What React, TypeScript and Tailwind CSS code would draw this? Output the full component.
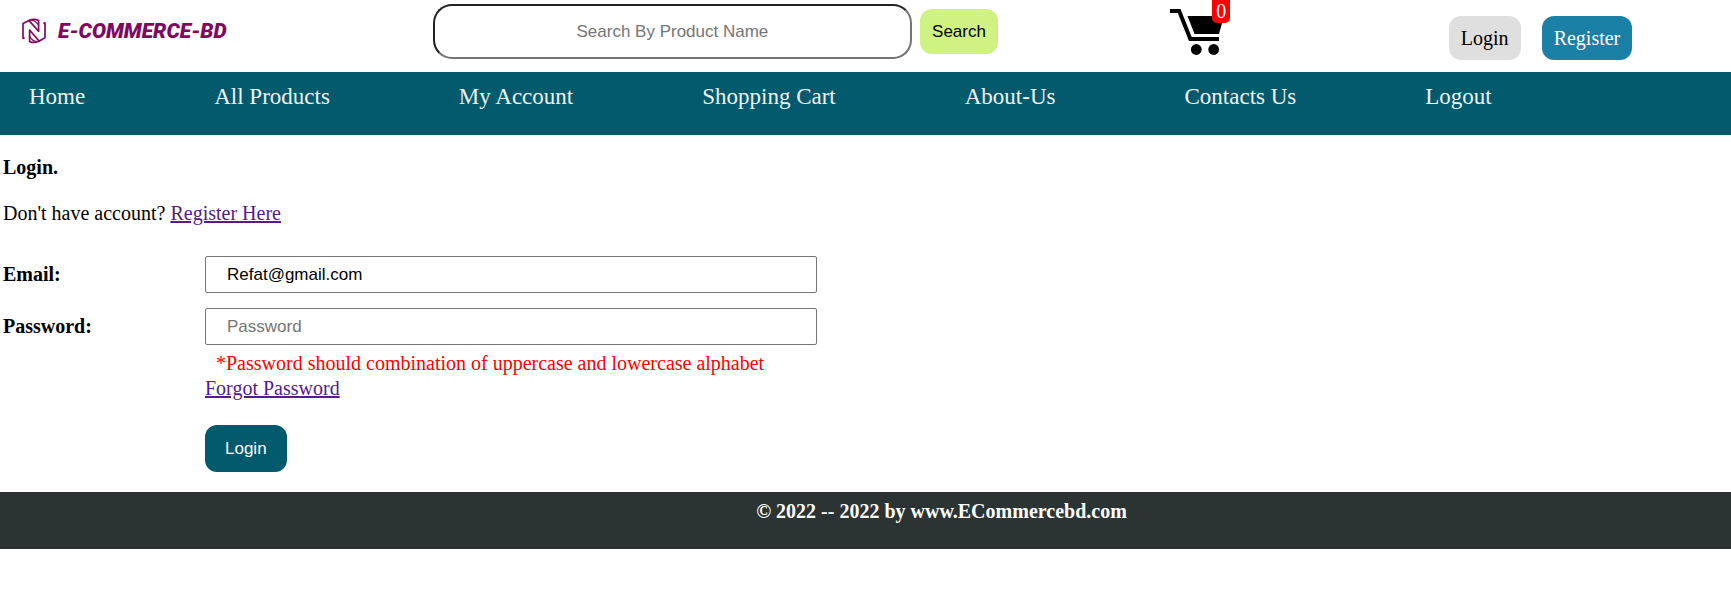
const navItems = [
  'Home',
  'All Products',
  'My Account',
  'Shopping Cart',
  'About-Us',
  'Contacts Us',
  'Logout',
];

function Logo() {
  return (
    <a href="#" className="flex items-center gap-3 pl-[22px] text-[#82085f]">
      <svg viewBox="0 0 24 26" className="h-[26px] w-6" fill="none" stroke="currentColor" strokeWidth="1.7" strokeLinejoin="round">
        <path d="M2.6 19.6L1 20.3V5.4L7 2.4Q12.5 .2 16.6 2.4V13.2L7 2.6" />
        <path d="M21.4 5.6L23 4.8V19.8L17 23.2Q11.5 25.6 7.6 23.4V12L17 23" />
        <path d="M9.4 2.4Q13.6 2.4 16.4 7M14.6 23.4Q10.4 23.2 7.8 18.6" strokeWidth="1.2" />
      </svg>
      <span className="font-['Roboto',sans-serif] text-[21px] leading-6 font-black italic">E-COMMERCE-BD</span>
    </a>
  );
}

function Cart() {
  return (
    <a href="#" aria-label="Shopping cart" className="relative block h-[55px] w-[60px]">
      <svg viewBox="0 0 60 55" className="h-[55px] w-[60px]" fill="currentColor">
        <path d="M0 9h10.5l11.2 28H49v4H19L7.8 13H0z" />
        <path d="M17.5 16H54l-5 18H24.5z" />
        <circle cx="26.3" cy="49.5" r="5.4" />
        <circle cx="43.7" cy="49.5" r="5.4" />
      </svg>
      <span className="absolute top-0 right-0 h-[23px] rounded-b-[5px] bg-[#ff0000] px-1 text-xl leading-[22px] text-white">0</span>
    </a>
  );
}

const fieldClass =
  "h-[37px] w-full rounded-[2px] border border-[#767676] bg-white px-[21px] font-['Liberation_Sans',sans-serif] text-[17px] text-black placeholder:text-[#757575] placeholder:opacity-100";

export default function App() {
  return (
    <div className="bg-white font-['Liberation_Serif',serif] text-xl leading-[25px] text-black">
      <header className="grid h-[72px] grid-cols-[250fr_426fr_161fr_163fr] items-start">
        <div className="pt-[18px]">
          <Logo />
        </div>
        <form className="flex items-center gap-2 pt-1" onSubmit={(e) => e.preventDefault()}>
          <input
            type="text"
            aria-label="Search products"
            placeholder="Search By Product Name"
            className="h-[55px] w-[65%] rounded-[19px] border-2 border-t-[#212121] border-r-[#757575] border-b-[#757575] border-l-[#212121] text-center font-['Liberation_Sans',sans-serif] text-[17px] placeholder:text-[#757575] placeholder:opacity-100"
          />
          <button type="submit" className="h-[45px] rounded-xl bg-[#d0f283] px-3 font-['Liberation_Sans',sans-serif] text-[17px]">
            Search
          </button>
        </form>
        <Cart />
        <div className="flex gap-[21px] pt-4 leading-6">
          <a href="#" className="rounded-xl bg-[#dfdfdf] px-3 py-2.5">Login</a>
          <a href="#" className="rounded-xl bg-[#1a80a6] px-3 py-2.5 text-white">Register</a>
        </div>
      </header>

      <nav className="flex h-[63px] gap-[129px] bg-[#035a6c] pt-3 pl-[29px] text-[23px] whitespace-nowrap text-[#f1f1f1]">
        {navItems.map((item) => (
          <a key={item} href="#">
            {item}
          </a>
        ))}
      </nav>

      <main className="px-[3px] py-5">
        <h1 className="font-bold">Login.</h1>
        <p className="mt-[21px]">
          Don't have account?{' '}
          <a href="#" className="text-[#551a8b] underline">Register Here</a>
        </p>
        <form
          className="mt-[30px] grid max-w-[814px] grid-cols-[202px_1fr]"
          onSubmit={(e) => e.preventDefault()}
        >
          <label htmlFor="email" className="pt-1.5 font-bold">Email:</label>
          <input id="email" type="email" defaultValue="Refat@gmail.com" className={fieldClass} />
          <label htmlFor="password" className="mt-[15px] pt-1.5 font-bold">Password:</label>
          <div className="mt-[15px]">
            <input id="password" type="password" placeholder="Password" className={fieldClass} />
            <p className="mt-1.5 pl-[11px] text-[#ff0000]">
              *Password should combination of uppercase and lowercase alphabet
            </p>
            <a href="#" className="text-[#551a8b] underline">Forgot Password</a>
            <button
              type="submit"
              className="mt-6 block h-[47px] rounded-xl bg-[#035a6c] px-5 font-['Liberation_Sans',sans-serif] text-[17px] text-white"
            >
              Login
            </button>
          </div>
        </form>
      </main>

      <footer className="h-[57px] bg-[#2c3333] pt-[7px] pl-[152px] text-center font-bold text-white">
        © 2022 -- 2022 by www.ECommercebd.com
      </footer>
    </div>
  );
}
